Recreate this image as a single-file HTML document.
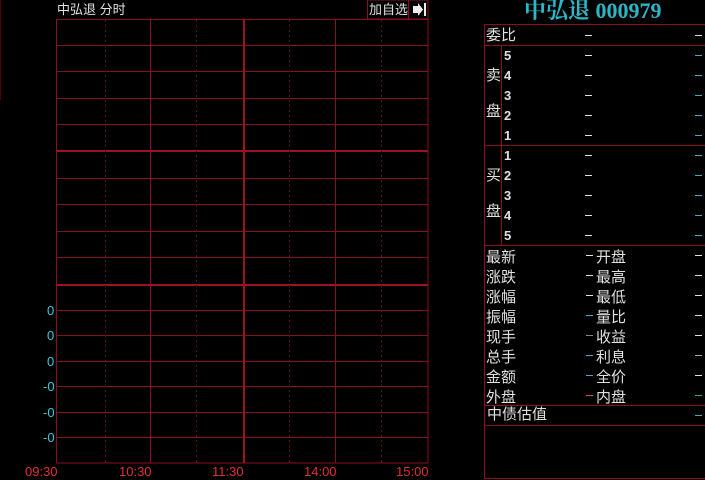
<!DOCTYPE html>
<html><head><meta charset="utf-8"><style>
body{margin:0;width:705px;height:480px;background:#000;overflow:hidden;position:relative;font-family:"Liberation Sans","Noto Sans CJK SC",sans-serif;}
.t{position:absolute;white-space:nowrap;line-height:1;}
.w{color:#e0e0e0;font-size:14px;}
.c{color:#3cc8d8;font-size:13px;}
.r{color:#e03030;font-size:13px;}
.d{position:absolute;height:1px;width:7px;background:#e0e0e0;}
.dc{background:#4ab;}
</style></head><body>
<svg width="705" height="480" style="position:absolute;left:0;top:0" shape-rendering="crispEdges">
<line x1="0.5" y1="0" x2="0.5" y2="100" stroke="#500" stroke-width="1"/>
<g stroke="#8a1020" stroke-width="1" fill="none">
<rect x="56.5" y="19.5" width="371.5" height="443.5"/>
<line x1="56" y1="45.5" x2="428" y2="45.5"/>
<line x1="56" y1="71.5" x2="428" y2="71.5"/>
<line x1="56" y1="98.5" x2="428" y2="98.5"/>
<line x1="56" y1="124.5" x2="428" y2="124.5"/>
<line x1="56" y1="178.5" x2="428" y2="178.5"/>
<line x1="56" y1="204.5" x2="428" y2="204.5"/>
<line x1="56" y1="231.5" x2="428" y2="231.5"/>
<line x1="56" y1="257.5" x2="428" y2="257.5"/>
<line x1="56" y1="310.5" x2="428" y2="310.5"/>
<line x1="56" y1="335.5" x2="428" y2="335.5"/>
<line x1="56" y1="361.5" x2="428" y2="361.5"/>
<line x1="56" y1="386.5" x2="428" y2="386.5"/>
<line x1="56" y1="412.5" x2="428" y2="412.5"/>
<line x1="56" y1="437.5" x2="428" y2="437.5"/>
<line x1="150.5" y1="19" x2="150.5" y2="463"/>
<line x1="335.5" y1="19" x2="335.5" y2="463"/>
</g>
<g stroke="#a01020" stroke-width="2">
<line x1="56" y1="151" x2="428" y2="151"/>
<line x1="56" y1="285" x2="428" y2="285"/>
<line x1="244" y1="19" x2="244" y2="463"/>
</g>
<g stroke="#5a1018" stroke-width="1" stroke-dasharray="2,3">
<line x1="105.5" y1="20" x2="105.5" y2="463"/>
<line x1="196.5" y1="20" x2="196.5" y2="463"/>
<line x1="289.5" y1="20" x2="289.5" y2="463"/>
<line x1="381.5" y1="20" x2="381.5" y2="463"/>
</g>
<g stroke="#8a1020" stroke-width="1" fill="none">
<rect x="367.5" y="0" width="41" height="19"/>
<rect x="408.5" y="0" width="19.5" height="19"/>
<rect x="484.5" y="24.5" width="221" height="454"/>
<line x1="484" y1="45.5" x2="705" y2="45.5"/>
<line x1="484" y1="145.5" x2="705" y2="145.5"/>
<line x1="484" y1="245.5" x2="705" y2="245.5"/>
<line x1="484" y1="405.5" x2="705" y2="405.5"/>
<line x1="484" y1="425.5" x2="705" y2="425.5"/>
<line x1="501.5" y1="45" x2="501.5" y2="245"/>
</g>
<polygon points="413,6 418,6 418,3 423,9.5 418,16 418,13 413,13" fill="#eee"/>
<rect x="424" y="3" width="2" height="13" fill="#eee"/>
</svg>
<div class="t w" style="left:57px;top:3px;font-size:13px">中弘退 分时</div>
<div class="t w" style="left:369px;top:3px;font-size:13px">加自选</div>
<div class="t" style="left:524px;top:0px;font-size:22px;font-weight:bold;color:#2ab8c8;font-family:'Liberation Serif','Noto Serif CJK SC',serif">中弘退 000979</div>

<div class="t c" style="left:47px;top:304px">0</div>
<div class="t c" style="left:47px;top:329px">0</div>
<div class="t c" style="left:47px;top:355px">0</div>
<div class="t c" style="left:43px;top:380px">-0</div>
<div class="t c" style="left:43px;top:406px">-0</div>
<div class="t c" style="left:43px;top:431px">-0</div>
<div class="t r" style="left:25px;top:465px">09:30</div>
<div class="t r" style="left:119px;top:465px">10:30</div>
<div class="t r" style="left:212px;top:465px">11:30</div>
<div class="t r" style="left:304px;top:465px">14:00</div>
<div class="t r" style="left:396px;top:465px">15:00</div>

<div class="t w" style="left:486px;top:28px;font-size:15px">委比</div>
<div class="d" style="left:585px;top:35px"></div><div class="d" style="left:695px;top:35px"></div>
<div class="t w" style="left:486px;top:68px;font-size:15px">卖</div>
<div class="t w" style="left:486px;top:104px;font-size:15px">盘</div>
<div class="t w" style="left:486px;top:168px;font-size:15px">买</div>
<div class="t w" style="left:486px;top:204px;font-size:15px">盘</div>
<div class="t w" style="left:504px;top:49px;font-size:13px;font-weight:bold">5</div>
<div class="t w" style="left:504px;top:69px;font-size:13px;font-weight:bold">4</div>
<div class="t w" style="left:504px;top:89px;font-size:13px;font-weight:bold">3</div>
<div class="t w" style="left:504px;top:109px;font-size:13px;font-weight:bold">2</div>
<div class="t w" style="left:504px;top:129px;font-size:13px;font-weight:bold">1</div>
<div class="t w" style="left:504px;top:149px;font-size:13px;font-weight:bold">1</div>
<div class="t w" style="left:504px;top:169px;font-size:13px;font-weight:bold">2</div>
<div class="t w" style="left:504px;top:189px;font-size:13px;font-weight:bold">3</div>
<div class="t w" style="left:504px;top:209px;font-size:13px;font-weight:bold">4</div>
<div class="t w" style="left:504px;top:229px;font-size:13px;font-weight:bold">5</div>
<div class="d" style="left:585px;top:55px"></div><div class="d dc" style="left:695px;top:55px"></div>
<div class="d" style="left:585px;top:75px"></div><div class="d dc" style="left:695px;top:75px"></div>
<div class="d" style="left:585px;top:95px"></div><div class="d dc" style="left:695px;top:95px"></div>
<div class="d" style="left:585px;top:115px"></div><div class="d dc" style="left:695px;top:115px"></div>
<div class="d" style="left:585px;top:135px"></div><div class="d dc" style="left:695px;top:135px"></div>
<div class="d" style="left:585px;top:155px"></div><div class="d dc" style="left:695px;top:155px"></div>
<div class="d" style="left:585px;top:175px"></div><div class="d dc" style="left:695px;top:175px"></div>
<div class="d" style="left:585px;top:195px"></div><div class="d dc" style="left:695px;top:195px"></div>
<div class="d" style="left:585px;top:215px"></div><div class="d dc" style="left:695px;top:215px"></div>
<div class="d" style="left:585px;top:235px"></div><div class="d dc" style="left:695px;top:235px"></div>

<div class="t w" style="left:486px;top:248px;font-size:15px;line-height:20px">最新<br>涨跌<br>涨幅<br>振幅<br>现手<br>总手<br>金额<br>外盘</div>
<div class="t w" style="left:596px;top:248px;font-size:15px;line-height:20px">开盘<br>最高<br>最低<br>量比<br>收益<br>利息<br>全价<br>内盘</div>
<div class="d" style="left:586px;top:255px"></div><div class="d" style="left:695px;top:255px"></div>
<div class="d" style="left:586px;top:275px"></div><div class="d" style="left:695px;top:275px"></div>
<div class="d" style="left:586px;top:295px"></div><div class="d" style="left:695px;top:295px"></div>
<div class="d dc" style="left:586px;top:315px"></div><div class="d" style="left:695px;top:315px"></div>
<div class="d" style="left:586px;top:335px;background:#888"></div><div class="d" style="left:695px;top:335px"></div>
<div class="d dc" style="left:586px;top:355px"></div><div class="d" style="left:695px;top:355px;background:#aaa"></div>
<div class="d dc" style="left:586px;top:375px"></div><div class="d" style="left:695px;top:375px"></div>
<div class="d" style="left:586px;top:395px;background:#c55"></div><div class="d" style="left:695px;top:395px;background:#4a4"></div>
<div class="t w" style="left:487px;top:407px;font-size:15px">中债估值</div>
<div class="d dc" style="left:695px;top:415px"></div>
</body></html>
